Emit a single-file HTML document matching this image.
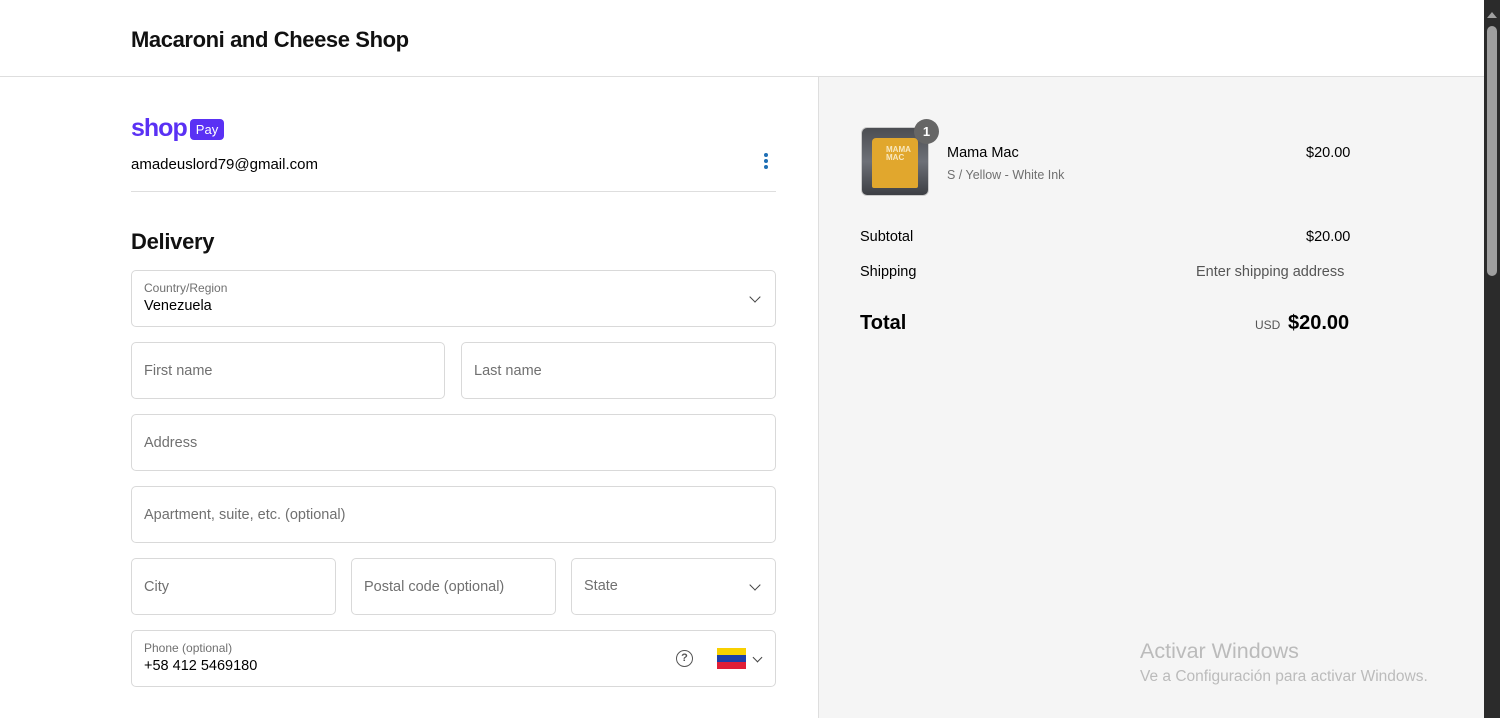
<!DOCTYPE html>
<html><head><style>
*{box-sizing:border-box;margin:0;padding:0}
body{width:1500px;height:718px;overflow:hidden;background:#fff;font-family:"Liberation Sans",Arial,sans-serif;color:#000;position:relative}
.hdr{position:absolute;left:0;top:0;width:1484px;height:77px;border-bottom:1px solid #dedede}
.hdr h1{position:absolute;left:131px;top:27px;font-size:22px;font-weight:700;letter-spacing:-0.4px;color:#111}
.right{position:absolute;left:818px;top:77px;width:666px;height:641px;background:#f5f5f5;border-left:1px solid #dedede}
.sb{position:absolute;left:1484px;top:0;width:16px;height:718px;background:#2b2b2b}
.thumb{position:absolute;left:1487px;top:26px;width:10px;height:250px;background:#9f9f9f;border-radius:5px}
.arrow{position:absolute;left:1487px;top:12px;width:0;height:0;border-left:5px solid transparent;border-right:5px solid transparent;border-bottom:6px solid #9f9f9f}
.f{position:absolute;border:1px solid #d9d9d9;border-radius:5px;background:#fff}
.ph{position:absolute;left:12px;top:20px;font-size:14.5px;color:#707070}
.lbl{position:absolute;left:12px;top:10px;font-size:12px;color:#707070}
.val{position:absolute;left:12px;top:27px;font-size:14.5px;color:#000}
.chev{position:absolute;right:16px;top:22px;width:8px;height:8px;border-right:1.5px solid #444;border-bottom:1.5px solid #444;transform:rotate(45deg)}
.t{position:absolute;font-size:14.5px}
</style></head><body>
<div class="hdr"><h1>Macaroni and Cheese Shop</h1></div>

<div style="position:absolute;left:131px;top:114px;font-size:25px;font-weight:700;color:#5a31f4;letter-spacing:-1px;line-height:28px">shop</div>
<div style="position:absolute;left:190px;top:119px;width:34px;height:21px;background:#5a31f4;border-radius:4px;color:#fff;font-size:13px;text-align:center;line-height:21px">Pay</div>
<div class="t" style="left:131px;top:156px;font-size:15px">amadeuslord79@gmail.com</div>
<div style="position:absolute;left:764px;top:153px;width:4px;height:4px;border-radius:2px;background:#1f6fb5;box-shadow:0 6px 0 #1f6fb5,0 12px 0 #1f6fb5"></div>
<div style="position:absolute;left:131px;top:191px;width:645px;height:1px;background:#dedede"></div>

<div style="position:absolute;left:131px;top:229px;font-size:22px;font-weight:700;letter-spacing:-0.3px;color:#111">Delivery</div>

<div class="f" style="left:131px;top:270px;width:645px;height:57px"><div class="lbl">Country/Region</div><div class="val">Venezuela</div><div class="chev"></div></div>
<div class="f" style="left:131px;top:342px;width:314px;height:57px"><div class="ph">First name</div></div>
<div class="f" style="left:461px;top:342px;width:315px;height:57px"><div class="ph">Last name</div></div>
<div class="f" style="left:131px;top:414px;width:645px;height:57px"><div class="ph">Address</div></div>
<div class="f" style="left:131px;top:486px;width:645px;height:57px"><div class="ph">Apartment, suite, etc. (optional)</div></div>
<div class="f" style="left:131px;top:558px;width:205px;height:57px"><div class="ph">City</div></div>
<div class="f" style="left:351px;top:558px;width:205px;height:57px"><div class="ph">Postal code (optional)</div></div>
<div class="f" style="left:571px;top:558px;width:205px;height:57px"><div class="ph" style="top:19px">State</div><div class="chev"></div></div>
<div class="f" style="left:131px;top:630px;width:645px;height:57px"><div class="lbl">Phone (optional)</div><div class="val">+58 412 5469180</div>
<div style="position:absolute;left:544px;top:19px;width:17px;height:17px;border:1.5px solid #555;border-radius:50%;font-size:11px;text-align:center;line-height:14px;color:#555;font-weight:700">?</div>
<div style="position:absolute;left:585px;top:17px;width:29px;height:21px">
<div style="height:7px;background:#f8d000"></div><div style="height:7px;background:#1c3ea8"></div><div style="height:7px;background:#e01e37"></div></div>
<div class="chev" style="right:14px;top:23px;width:7px;height:7px"></div></div>

<div class="right"></div>
<div style="position:absolute;left:861px;top:127px;width:68px;height:69px;border-radius:6px;background:linear-gradient(#4b4d52,#6d7077 50%,#3d3f44);border:1px solid #ccc">
<div style="position:absolute;left:10px;top:10px;width:46px;height:50px;background:#e1a72d;border-radius:4px 4px 2px 2px"></div>
<div style="position:absolute;left:24px;top:18px;font-size:8px;color:#f8e8c0;font-weight:700;line-height:8px">MAMA<br>MAC</div></div>
<div style="position:absolute;left:914px;top:119px;width:25px;height:25px;border-radius:50%;background:#666;color:#fff;font-size:13px;font-weight:700;text-align:center;line-height:25px">1</div>
<div class="t" style="left:947px;top:145px">Mama Mac</div>
<div style="position:absolute;left:947px;top:168px;font-size:12.5px;color:#707070">S / Yellow - White Ink</div>
<div class="t" style="left:1306px;top:145px">$20.00</div>
<div class="t" style="left:860px;top:229px">Subtotal</div>
<div class="t" style="left:1306px;top:229px">$20.00</div>
<div class="t" style="left:860px;top:264px">Shipping</div>
<div class="t" style="left:1196px;top:264px;color:#555">Enter shipping address</div>
<div style="position:absolute;left:860px;top:312px;font-size:20px;font-weight:700">Total</div>
<div style="position:absolute;left:1255px;top:318px;font-size:12px;color:#555">USD</div>
<div style="position:absolute;left:1288px;top:312px;font-size:20px;font-weight:700">$20.00</div>
<div style="position:absolute;left:1140px;top:639px;font-size:21.5px;color:#bbb">Activar Windows</div>
<div style="position:absolute;left:1140px;top:668px;font-size:15.5px;color:#bbb">Ve a Configuración para activar Windows.</div>

<div class="sb"></div><div class="arrow"></div><div class="thumb"></div>
</body></html>
